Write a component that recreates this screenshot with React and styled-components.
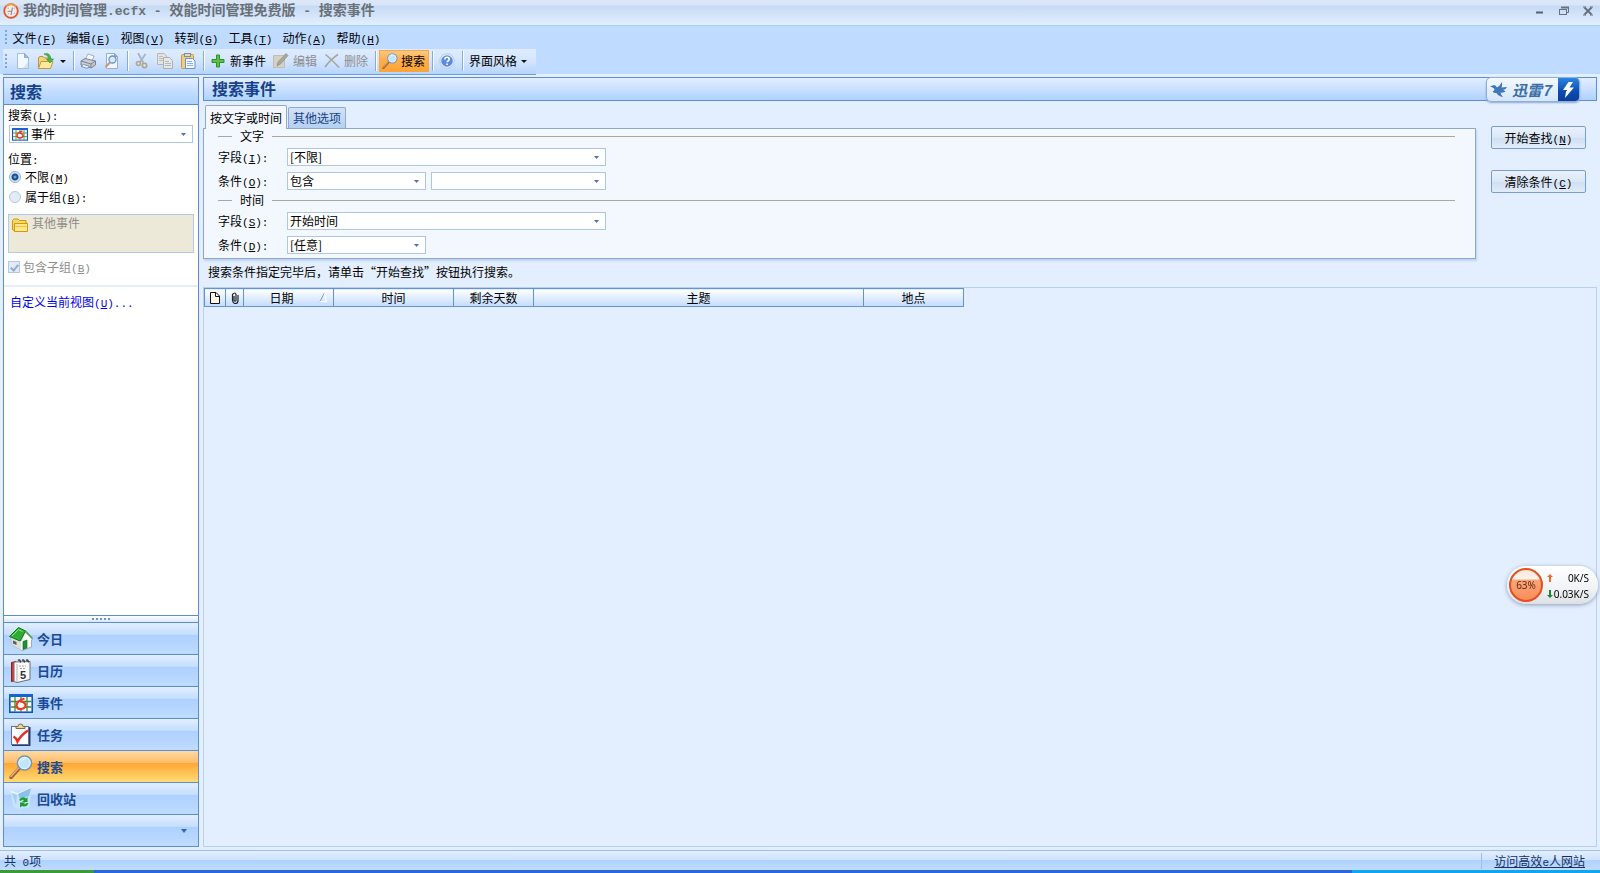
import { useState } from "react"
import styled, { createGlobalStyle } from "styled-components"

const MENUS = [
    ["文件", "F"],
    ["编辑", "E"],
    ["视图", "V"],
    ["转到", "G"],
    ["工具", "T"],
    ["动作", "A"],
    ["帮助", "H"],
]

const COLUNAS = [
    { nome: "日期", largura: 90, ordenada: true },
    { nome: "时间", largura: 120 },
    { nome: "剩余天数", largura: 80 },
    { nome: "主题", largura: 330 },
    { nome: "地点", largura: 100 },
]

const NAVEGACAO = [
    { nome: "今日", Icone: IconeCasa },
    { nome: "日历", Icone: IconeCalendario },
    { nome: "事件", Icone: IconeEvento },
    { nome: "任务", Icone: IconeTarefa },
    { nome: "搜索", Icone: IconeLupa },
    { nome: "回收站", Icone: IconeLixeira },
]

function Tecla({ letra, fim = "" }) {
    return <Mono>(<u>{letra}</u>){fim}</Mono>
}

function Combo({ id, rotulo, opcao = "", largura, recuo, children }) {
    return (
        <CaixaCombo $largura={largura}>
            {children}
            <Selecao id={id} aria-label={rotulo} $recuo={recuo}>
                <option>{opcao}</option>
            </Selecao>
            <SetaCombo width="5" height="3" viewBox="0 0 5 3"><path d="M0 0h5L2.5 3z" fill="#4a72b0" /></SetaCombo>
        </CaixaCombo>
    )
}

export default function App() {
    const [local, setLocal] = useState("todos")
    const [aba, setAba] = useState(0)
    const [ativo, setAtivo] = useState("搜索")

    return (
        <Janela>
            <EstiloGlobal />
            <BarraTitulo>
                <IconeApp />
                <h1>我的时间管理<span>.ecfx - </span>效能时间管理免费版<span> - </span>搜索事件</h1>
                <BotoesJanela>
                    <button aria-label="最小化"><svg width="10" height="10" viewBox="0 0 10 10"><path d="M1 6.5h7" stroke="#596270" strokeWidth="2" /></svg></button>
                    <button aria-label="还原"><svg width="10" height="10" viewBox="0 0 10 10" fill="none" stroke="#68727f"><path d="M2.5 2V1.5h7v5H8" /><path d="M2 1.5h8" strokeWidth="2" /><rect x=".5" y="3.5" width="7" height="5" /></svg></button>
                    <button aria-label="关闭"><svg width="10" height="10" viewBox="0 0 10 10"><path d="M1.500 1.500l7 7M8.500 1.500l-7 7" stroke="#66707e" strokeWidth="2" /><path d="M0 1h3M7 1h3M0 9h3M7 9h3" stroke="#66707e" /></svg></button>
                </BotoesJanela>
            </BarraTitulo>

            <BarraMenu>
                <Pega />
                {MENUS.map(([nome, letra]) =>
                    <button key={letra}>{nome}<Tecla letra={letra} /></button>
                )}
            </BarraMenu>

            <Ferramentas>
                <Pega />
                <Ferramenta aria-label="新建"><IconeNovo /></Ferramenta>
                <Ferramenta aria-label="打开"><IconeAbrir /><Seta /></Ferramenta>
                <Divisor />
                <Ferramenta aria-label="打印"><IconeImpressora /></Ferramenta>
                <Ferramenta aria-label="预览"><IconePrevia /></Ferramenta>
                <Divisor />
                <Ferramenta aria-label="剪切"><IconeTesoura /></Ferramenta>
                <Ferramenta aria-label="复制"><IconeCopiar /></Ferramenta>
                <Ferramenta aria-label="粘贴"><IconeColar /></Ferramenta>
                <Divisor />
                <Ferramenta><IconeMais />新事件</Ferramenta>
                <Ferramenta disabled><IconeEditar />编辑</Ferramenta>
                <Ferramenta disabled><IconeExcluir />删除</Ferramenta>
                <Divisor />
                <Ferramenta $ativa><IconeLupa tamanho={16} />搜索</Ferramenta>
                <Divisor />
                <Ferramenta aria-label="帮助"><IconeAjuda /></Ferramenta>
                <Divisor />
                <Ferramenta>界面风格<Seta /></Ferramenta>
            </Ferramentas>

            <Area>
                <Lateral>
                    <TituloLateral>搜索</TituloLateral>
                    <Filtros>
                        <label htmlFor="tipo">搜索<Tecla letra="L" fim=":" /></label>
                        <Combo id="tipo" opcao="事件" recuo={21}>
                            <IconeCombo><IconeEvento tamanho={16} /></IconeCombo>
                        </Combo>
                        <p>位置<Mono>:</Mono></p>
                        <Opcao>
                            <input type="radio" name="local" checked={local === "todos"} onChange={() => setLocal("todos")} />
                            <span>不限<Tecla letra="M" /></span>
                        </Opcao>
                        <Opcao>
                            <input type="radio" name="local" checked={local === "grupo"} onChange={() => setLocal("grupo")} />
                            <span>属于组<Tecla letra="B" fim=":" /></span>
                        </Opcao>
                        <Grupo><IconePasta />其他事件</Grupo>
                        <Opcao $apagada>
                            <input type="checkbox" checked disabled readOnly />
                            <span>包含子组<Tecla letra="B" /></span>
                        </Opcao>
                    </Filtros>
                    <LinkVista href="#vista">自定义当前视图<Tecla letra="U" fim="..." /></LinkVista>
                    <Divisoria><i /><i /><i /><i /><i /></Divisoria>
                    <nav>
                        {NAVEGACAO.map(({ nome, Icone }) =>
                            <ItemNav key={nome} $ativo={nome === ativo} onClick={() => setAtivo(nome)}>
                                <Icone />{nome}
                            </ItemNav>
                        )}
                        <ItemNav aria-label="更多" $fim><svg width="6" height="4" viewBox="0 0 6 4"><path d="M0 0h6L3 4z" fill="#3a66a8" /></svg></ItemNav>
                    </nav>
                </Lateral>

                <Principal>
                    <TituloPrincipal>搜索事件</TituloPrincipal>
                    <Xunlei>
                        <div>
                            <svg width="18" height="16" viewBox="0 0 18 16" fill="#3f78b4"><path d="M0 4.500L4 3q2 0 3 2.500Q9.500 4.500 12 0q.5 3-.5 5.500L17 5q-1 2.500-4 3 2 .5 2.500 1.500-2 1.500-5 1 .5 2.500 2.500 4.500Q8 14 6.500 11 4 11.500 2.500 9.500 4.500 9 4.500 7 3 5 0 4.500z" /></svg>
                            迅雷7
                        </div>
                        <b><svg width="13" height="16" viewBox="0 0 13 16" fill="#fff"><path d="M6.500 0L1 8h4.500L4 9.500 3 16l9-10.500H7.500L11 0z" /></svg></b>
                    </Xunlei>

                    <Busca>
                        <div>
                            <Abas>
                                <Aba $ativa={aba === 0} onClick={() => setAba(0)}>按文字或时间</Aba>
                                <Aba $ativa={aba === 1} onClick={() => setAba(1)}>其他选项</Aba>
                            </Abas>
                            <Painel>
                                <Secao>
                                    <Legenda>文字</Legenda>
                                    <Linha>
                                        <label htmlFor="campo-texto">字段<Tecla letra="I" fim=":" /></label>
                                        <Combo id="campo-texto" opcao="[不限]" largura={319} />
                                    </Linha>
                                    <Linha>
                                        <label htmlFor="cond-texto">条件<Tecla letra="O" fim=":" /></label>
                                        <Combo id="cond-texto" opcao="包含" largura={139} />
                                        <Combo rotulo="文字内容" largura={175} />
                                    </Linha>
                                </Secao>
                                <Secao>
                                    <Legenda>时间</Legenda>
                                    <Linha>
                                        <label htmlFor="campo-tempo">字段<Tecla letra="S" fim=":" /></label>
                                        <Combo id="campo-tempo" opcao="开始时间" largura={319} />
                                    </Linha>
                                    <Linha>
                                        <label htmlFor="cond-tempo">条件<Tecla letra="D" fim=":" /></label>
                                        <Combo id="cond-tempo" opcao="[任意]" largura={139} />
                                    </Linha>
                                </Secao>
                            </Painel>
                        </div>
                        <Acoes>
                            <Botao>开始查找<Tecla letra="N" /></Botao>
                            <Botao>清除条件<Tecla letra="C" /></Botao>
                        </Acoes>
                    </Busca>

                    <Dica>搜索条件指定完毕后，请单击“开始查找”按钮执行搜索。</Dica>

                    <Resultados>
                        <Tabela>
                            <colgroup>
                                <col width="21" />
                                <col width="18" />
                                {COLUNAS.map(c => <col key={c.nome} width={c.largura} />)}
                            </colgroup>
                            <thead>
                                <tr>
                                    <th aria-label="图标"><svg width="10" height="12" viewBox="0 0 10 12"><path d="M.5.5h5.500L9.500 4v7.500h-9z" fill="#fbf8e8" stroke="#111" /><path d="M5.500.5V4.500h4" fill="none" stroke="#111" /></svg></th>
                                    <th aria-label="附件"><svg width="8" height="12" viewBox="0 0 8 12" fill="none" stroke="#222" strokeWidth="1.200"><path d="M3 4v4.500q1 1.500 2 0V2.500Q4-.5 1.500 2.500v6q.5 3 3 3t2.500-3V3" /></svg></th>
                                    {COLUNAS.map(c =>
                                        <th key={c.nome}>
                                            <Celula>
                                                <span>{c.nome}</span>
                                                {c.ordenada && <svg width="8" height="9" viewBox="0 0 8 9"><path d="M1 8.500L5 .5" stroke="#7fa0d8" /><path d="M5.500 1l2 7.500H1" stroke="#fff" fill="none" /></svg>}
                                            </Celula>
                                        </th>
                                    )}
                                </tr>
                            </thead>
                        </Tabela>
                    </Resultados>
                </Principal>
            </Area>

            <BarraStatus>
                <span>共<Mono>&nbsp;0</Mono>项</span>
                <div><a href="#site">访问高效<Mono>e</Mono>人网站</a></div>
            </BarraStatus>
            <Rodape><i /><i /></Rodape>

            <Velocidade>
                <Medidor>63%</Medidor>
                <dl>
                    <dt><svg width="6" height="8" viewBox="0 0 6 8"><path d="M3 0l3 3H4v5H2V3H0z" fill="#f26a1b" /></svg></dt>
                    <dd>0K/S</dd>
                    <dt><svg width="6" height="8" viewBox="0 0 6 8"><path d="M3 8l3-3H4V0H2v5H0z" fill="#178a2c" /></svg></dt>
                    <dd>0.03K/S</dd>
                </dl>
            </Velocidade>
        </Janela>
    )
}

/* ---------- icones ---------- */

function Seta() {
    return <svg width="6" height="3" viewBox="0 0 6 3"><path d="M0 0h6L3 3z" fill="#111" /></svg>
}

function IconeApp() {
    return (
        <svg width="16" height="16" viewBox="0 0 16 16">
            <circle cx="8" cy="8" r="6.800" fill="#f4ece6" stroke="#e4572e" strokeWidth="1.800" />
            <path d="M3 3.500A6.800 6.800 0 0 1 13 3.500" fill="none" stroke="#f49a3c" strokeWidth="1.600" />
            <path d="M8 12l1.500-7.500M4.500 8.500L8.500 8M11 5l.5.5M5 5l.5.5M11.500 10.500l-.5-.5M5 11l.5-.5" stroke="#8d8b94" strokeWidth="1.200" />
        </svg>
    )
}

function IconeNovo() {
    return (
        <svg width="16" height="16" viewBox="0 0 16 16">
            <path d="M2.500.5h7l4 4v11h-11z" fill="#f2f8ff" stroke="#a9bedb" />
            <path d="M9.500.5v4h4z" fill="#9dc0ea" stroke="#87a9d6" />
            <path d="M8 15l5-6v6z" fill="#cfe2f8" />
        </svg>
    )
}

function IconeAbrir() {
    return (
        <svg width="16" height="16" viewBox="0 0 16 16">
            <path d="M.5 14.500v-10L2 3.500h3l1.500 1.500h6v9.500z" fill="#f3d477" stroke="#b8943c" />
            <path d="M.5 15.500L3 8.500h12l-2.500 7z" fill="#fde99a" stroke="#bf9a3c" />
            <path d="M6 1q6-2 7 5h2.500L12 10 8.500 6H11Q10.500 2 6 1z" fill="#4cb848" stroke="#2b8a30" strokeWidth=".6" />
        </svg>
    )
}

function IconeImpressora() {
    return (
        <svg width="17" height="16" viewBox="0 0 17 16">
            <path d="M5 7l3-6 6 2-2.500 6z" fill="#fff" stroke="#9fb0c8" />
            <path d="M1 8l4-2.500 10.500 2.500v4L11 15 1 12z" fill="#c7ccd6" stroke="#7b8494" />
            <path d="M1 8l10 3 4.500-3M11 11v4" fill="none" stroke="#7b8494" />
            <path d="M3.500 11.500l6 1.800-2.500 2-6-2z" fill="#f8fbff" stroke="#7390bd" />
            <path d="M12.500 12l1.500-1" stroke="#e9b844" strokeWidth="1.500" />
        </svg>
    )
}

function IconePrevia() {
    return (
        <svg width="16" height="16" viewBox="0 0 16 16">
            <path d="M2.500.5h8l3 3v12h-11z" fill="#eff6ff" stroke="#98afd0" />
            <path d="M10.500.5v3h3z" fill="#94b5e4" stroke="#8aa8d4" />
            <circle cx="8.500" cy="6.500" r="3.500" fill="#d5ecff" stroke="#6d93c8" strokeWidth="1.300" />
            <path d="M6 9.500L1.500 14" stroke="#c9966a" strokeWidth="2" />
        </svg>
    )
}

function IconeTesoura() {
    return (
        <svg width="16" height="16" viewBox="0 0 16 16" fill="none">
            <path d="M4 0l5.500 10M11.500 1L6 9" stroke="#a5b3c7" strokeWidth="1.800" />
            <circle cx="4.500" cy="10.500" r="2" stroke="#b3a486" strokeWidth="1.600" />
            <circle cx="10.500" cy="12.500" r="2.200" stroke="#b3a486" strokeWidth="1.600" />
        </svg>
    )
}

function IconeCopiar() {
    return (
        <svg width="16" height="16" viewBox="0 0 16 16">
            <path d="M.5.500h6.500l2.500 2.500v8.500h-9z" fill="#e4e5e3" stroke="#b9b8ad" />
            <path d="M2 3.500h4M2 5.500h5M2 7.500h4" stroke="#b9bec5" />
            <path d="M6.500 4.500h6l3 3v8h-9z" fill="#e6e8e8" stroke="#b0b0a6" />
            <path d="M8 8.500h4M8 10.500h6M8 12.500h6" stroke="#b1b8c2" />
        </svg>
    )
}

function IconeColar() {
    return (
        <svg width="16" height="16" viewBox="0 0 16 16">
            <rect x="1.500" y="1.500" width="12" height="14" rx="1" fill="#f3cf73" stroke="#c89b3c" />
            <rect x="4.500" y=".5" width="6" height="3" fill="#d6dbe4" stroke="#848d9c" />
            <path d="M5.500 5.500h7l2.500 2.500v7.500H5.500z" fill="#f1f7ff" stroke="#6c93cf" />
            <path d="M7 8.500h5M7 10.500h6M7 12.500h6" stroke="#8db0e2" />
        </svg>
    )
}

function IconeMais() {
    return <svg width="16" height="16" viewBox="0 0 16 16"><path d="M6.500 2h3v4.500H14v3H9.500V14h-3V9.500H2v-3h4.500z" fill="#5cc247" stroke="#2f8f2b" /></svg>
}

function IconeEditar() {
    return (
        <svg width="16" height="16" viewBox="0 0 16 16">
            <path d="M.5 2.500h11v12H.5z" fill="#d4d2c4" stroke="#c0beb1" />
            <path d="M13 .5l2 2L7.500 11 4 13l1-4z" fill="#a8a798" stroke="#8f8e83" strokeWidth=".7" />
        </svg>
    )
}

function IconeExcluir() {
    return <svg width="16" height="16" viewBox="0 0 16 16"><path d="M1.500 1.500Q7 6 15 14.500M14 1.500Q7 6 1 14" fill="none" stroke="#a7a69d" strokeWidth="1.600" /></svg>
}

function IconeAjuda() {
    return (
        <svg width="16" height="16" viewBox="0 0 16 16">
            <circle cx="8" cy="8" r="7.200" fill="#edf3fc" stroke="#b9c8df" />
            <circle cx="8" cy="8" r="5.800" fill="#5b8be0" />
            <path d="M5.800 6.500q0-2.200 2.200-2.200t2.200 1.900q0 1.200-1.200 1.800-.9.500-.9 1.300M8.100 10.500v1.500" fill="none" stroke="#fff" strokeWidth="1.600" />
        </svg>
    )
}

function IconeLupa({ tamanho = 24 }) {
    return (
        <svg width={tamanho} height={tamanho} viewBox="0 0 24 24">
            <path d="M2 22.500L10.500 13" stroke="#a0643a" strokeWidth="3.400" strokeLinecap="round" />
            <path d="M2 21.500L10 12.500" stroke="#e9b27c" strokeWidth="1.400" strokeLinecap="round" />
            <circle cx="15.500" cy="8" r="7" fill="#bfe6fb" stroke="#6f93bd" strokeWidth="1.600" />
            <circle cx="15.500" cy="8" r="5.700" fill="none" stroke="#eef8ff" />
            <path d="M12 7q1-4 5-3.500Q13 5 12 7z" fill="#fff" />
        </svg>
    )
}

function IconeCasa() {
    return (
        <svg width="24" height="24" viewBox="0 0 24 24">
            <path d="M2 10l10 4 4-9 7.500 7-1 1v7L13 23.500 2.500 17.500z" fill="#fbfbf8" stroke="#9a9d9a" strokeWidth=".8" />
            <path d="M2.500 11L12 15v8L2.500 17.500z" fill="#dcdeda" />
            <path d="M4 13.500l3.500 1.500v3L4 16.500z" fill="#555c66" />
            <path d="M14 14.500l4-1.500v8l-4 1.500z" fill="#1e9130" stroke="#0f6320" strokeWidth=".6" />
            <path d="M.5 9.500L9.500.5 16.500 4 11 14z" fill="#2fae35" stroke="#17751f" />
            <path d="M16 3.500l7.500 8" stroke="#4f9b52" strokeWidth="1.400" />
            <path d="M3 9L9.500 2.500l4 2" fill="none" stroke="#8ee486" />
        </svg>
    )
}

function IconeCalendario() {
    return (
        <svg width="24" height="24" viewBox="0 0 24 24">
            <path d="M2.500 3.500L7 2.500v19l-4.500 1z" fill="#d33a32" stroke="#8f1c1a" />
            <path d="M5 3l16-.5v18L8 23.500l-3-1z" fill="#fbfbfb" stroke="#6e6e72" />
            <path d="M8 5v18" stroke="#b5b5b8" />
            <path d="M9 1.500q2-2 2.500 2M13 1.500q2-2 2.500 2M17 1.500q2-2 2.500 2" fill="none" stroke="#333" strokeWidth="1.300" />
            <path d="M10 7h7M11 9.500h6" stroke="#aaa" strokeDasharray="2 1" />
            <text x="11" y="20" fontFamily="Liberation Sans, sans-serif" fontSize="11" fontWeight="700" fill="#333">5</text>
        </svg>
    )
}

function IconeEvento({ tamanho = 24 }) {
    return (
        <svg width={tamanho} height={tamanho} viewBox="0 0 24 24">
            <rect x=".8" y="3.800" width="22.400" height="17.400" fill="#fff" stroke="#0c55c0" strokeWidth="1.600" />
            <path d="M0 3h24v3H0z" fill="#1264d8" />
            <path d="M1.500 10.500h21M1.500 16h21M6 6v14.500M18 6v14.500M12 17v3.500M12 6v3" stroke="#3f8a3a" strokeWidth="1.300" />
            <path d="M15.500 7.500Q7.500 10 7.500 14.500q.5 4 5 3.500 4.500-1 4-4.500-1.500-3-5.500-3" fill="#fff" stroke="#ee3a22" strokeWidth="2.200" />
        </svg>
    )
}

function IconeTarefa() {
    return (
        <svg width="24" height="24" viewBox="0 0 24 24">
            <rect x="3" y="4" width="18.500" height="19" fill="#2c3e68" />
            <rect x="2.500" y="3.500" width="17" height="18" fill="#fafcff" stroke="#5f6f98" />
            <path d="M7 5.500V3.500h2Q9 1 11.500 1T14 3.500h2v2z" fill="#e6d6a2" stroke="#7d6b3a" />
            <path d="M4.500 13.500q3 1.500 4 5Q12 12 19 7.500" fill="none" stroke="#e42c20" strokeWidth="2.500" />
        </svg>
    )
}

function IconeLixeira() {
    return (
        <svg width="24" height="24" viewBox="0 0 24 24">
            <path d="M1.500 4.500l8-1 13-3-2 20L9 22l-5-2.500z" fill="#c6e3f9" />
            <path d="M1.500 4.500L9 7l13.500-6.500" fill="none" stroke="#e9f6ff" strokeWidth="1.600" />
            <path d="M9 7l13-6-2 8-9 3z" fill="#8cc0ec" />
            <path d="M3 6l5 2-1 10z" fill="#a4cff2" />
            <path d="M10 13q3-4.500 7-1.500l1.500-1.500v5h-5.500L15 13q-2-1-3 1zM19.500 16q-2 5-6.500 3L11 20.500v-5h5.500L15 17q1.500.5 2.500-1z" fill="#1d9c30" />
        </svg>
    )
}

function IconePasta() {
    return (
        <svg width="16" height="14" viewBox="0 0 16 14">
            <path d="M.5 12V2.500l1.500-1.500h4l1.500 1.500h6.500V6" fill="#f8d667" stroke="#d09a10" />
            <path d="M2.500 13.500v-8h13v8z" fill="#fde58c" stroke="#d09a10" />
            <path d="M.5 11l2 2.500" stroke="#d09a10" />
            <path d="M3.500 8.500h11" stroke="#f2c33c" />
        </svg>
    )
}

/* ---------- estilos ---------- */

const EstiloGlobal = createGlobalStyle`
    *{
        box-sizing: border-box;
    }
    body{
        margin: 0;
        background: #e3efff;
    }
    body, button, select, input{
        font-family: "Noto Sans CJK SC", sans-serif;
        font-size: 12px;
        line-height: 16px;
        color: #000;
    }
    h1, h2, p, dl, dd{
        margin: 0;
    }
    button{
        border: none;
        background: none;
        padding: 0;
        white-space: nowrap;
    }
    svg{
        flex-shrink: 0;
    }
`

const Mono = styled.span`
    font-family: "Liberation Mono", monospace;
    font-size: 11px;
    line-height: 1;
`

const Janela = styled.div`
    min-height: 100vh;
    display: flex;
    flex-direction: column;
`

const BarraTitulo = styled.header`
    height: 26px;
    padding: 0 7px 3px 3px;
    display: flex;
    align-items: center;
    gap: 4px;
    background: linear-gradient(#dce8f8 0, #d9e6f8 5px, #c6daf5 6px, #e2effd 100%);
    border-bottom: 1px solid #a3d0ee;

    h1{
        flex: 1;
        font-family: "Liberation Mono", "Noto Sans CJK SC", monospace;
        font-size: 14px;
        font-weight: 700;
        color: #6a7078;
        white-space: pre;
    }
    h1 span{
        font-size: 13px;
    }
`

const BotoesJanela = styled.div`
    display: flex;
    gap: 14px;

    button{
        width: 10px;
        height: 10px;
        display: flex;
    }
`

const Pega = styled.i`
    width: 2px;
    height: 15px;
    background: repeating-linear-gradient(#7ea6dc 0 2px, transparent 2px 4px);
`

const BarraMenu = styled.nav`
    height: 23px;
    padding-left: 5px;
    display: flex;
    align-items: center;
    background: #bfdbff;

    button{
        width: 54px;
        padding-left: 1px;
    }
`

const Ferramentas = styled.div`
    position: relative;
    height: 25px;
    padding: 0 0 1px 5px;
    display: flex;
    align-items: center;
    background: #bfdbff;

    &::before{
        content: "";
        position: absolute;
        left: 3px;
        top: 0;
        width: 533px;
        height: 25px;
        background: linear-gradient(#dfecff, #d2e4fe 50%, #b5d4fd);
        border-bottom: 1px solid #6f9dd9;
    }
    > *{
        position: relative;
    }
    ${Pega}{
        margin-right: 5px;
    }
`

const Ferramenta = styled.button`
    height: 22px;
    padding: ${({ $ativa }) => $ativa ? "0 3px 0 2px" : "0 4px 0 3px"};
    display: flex;
    align-items: center;
    gap: ${({ $ativa }) => $ativa ? 3 : 4}px;
    background: ${({ $ativa }) => $ativa ? "linear-gradient(#fdc986, #fdb04f 40%, #ffa336)" : "none"};
    border: ${({ $ativa }) => $ativa ? "1px solid #fba63c" : "none"};

    &:disabled{
        color: #8d8d8d;
    }
    svg + svg{
        margin-left: 2px;
    }
`

const Divisor = styled.i`
    width: 2px;
    height: 20px;
    margin: 0 2px 0 3px;
    background: #7fabe6;
    border-right: 1px solid #fff;
`

const Area = styled.div`
    flex: 1;
    display: grid;
    grid-template-columns: 196px minmax(0, 1fr);
    gap: 4px;
    padding: 3px;
`

const Lateral = styled.aside`
    display: flex;
    flex-direction: column;
    background: #fff;
    border: 1px solid #5b8dd6;
`

const TituloLateral = styled.h2`
    height: 27px;
    padding-left: 6px;
    font-size: 16px;
    line-height: 26px;
    color: #15428b;
    background: linear-gradient(#e3efff, #c4ddff 50%, #afd2ff);
    border-bottom: 1px solid #5b8dd6;
`

const Filtros = styled.div`
    padding: 2px 4px 10px 4px;
    border-bottom: 2px solid #e3efff;

    > label, > p{
        display: block;
        margin-bottom: 2px;
    }
    > p{
        margin-top: 8px;
    }
`

const Opcao = styled.label`
    && {
        display: flex;
        align-items: center;
        gap: 3px;
        margin-bottom: ${({ $apagada }) => $apagada ? 0 : 4}px;
        color: ${({ $apagada }) => $apagada ? "#8d8d8d" : "#000"};
    }
    input{
        appearance: none;
        width: 12px;
        height: 12px;
        margin: 0 1px;
        border: 1px solid #b4c8e4;
        background: #e2ebf6;
    }
    input[type="radio"]{
        border-radius: 50%;
    }
    input[type="radio"]:checked{
        border-color: #8db2e3;
        background: radial-gradient(circle at 5px 5px, #9fd0ee 0, #17548d 2px, #17548d 3px, #d5e5f7 4px);
    }
    input[type="checkbox"]{
        margin: 0;
        display: grid;
        place-items: center;
    }
    input[type="checkbox"]::before{
        content: "";
        width: 3px;
        height: 6px;
        border: solid #93abcb;
        border-width: 0 2px 2px 0;
        rotate: 40deg;
    }
`

const CaixaCombo = styled.div`
    position: relative;
    height: 18px;
    width: ${({ $largura }) => $largura ? `${$largura}px` : "auto"};
    margin: ${({ $largura }) => $largura ? 0 : "0 1px"};
`

const Selecao = styled.select`
    appearance: none;
    width: 100%;
    height: 18px;
    padding: 0 16px 0 ${({ $recuo = 2 }) => $recuo}px;
    border: 1px solid #abc6e6;
    border-radius: 0;
    background: #fff;
    line-height: 16px;
`

const SetaCombo = styled.svg`
    position: absolute;
    right: 7px;
    top: 8px;
    pointer-events: none;
`

const IconeCombo = styled.span`
    position: absolute;
    left: 3px;
    top: 1px;
    display: flex;
`

const Grupo = styled.div`
    display: flex;
    align-items: flex-start;
    gap: 4px;
    height: 39px;
    margin: 9px 0 6px 0;
    padding: 0 3px;
    color: #8d8d8d;
    background: #ece9d8;
    border: 1px solid #b4c9e8;

    svg{
        margin-top: 3px;
    }
`

const LinkVista = styled.a`
    flex: 1;
    padding: 7px 6px;
    color: #0000f0;
    text-decoration: none;
`

const Divisoria = styled.div`
    height: 7px;
    display: flex;
    align-items: center;
    justify-content: center;
    gap: 2px;
    background: linear-gradient(#fff, #d9e8ff);
    border-top: 1px solid #5b8dd6;

    i{
        width: 2px;
        height: 2px;
        background: #6f96cf;
    }
`

const ItemNav = styled.button`
    width: 100%;
    height: 32px;
    padding: 0 11px 0 5px;
    display: flex;
    align-items: center;
    justify-content: ${({ $fim }) => $fim ? "flex-end" : "flex-start"};
    gap: 4px;
    font-size: 13px;
    font-weight: 700;
    color: #1c4a92;
    border-top: 1px solid #5b8dd6;
    background: ${({ $ativo }) => $ativo
        ? "linear-gradient(#ffd9a0, #ffbd69 38%, #ffa633 40%, #fedd75)"
        : "linear-gradient(#e3efff, #c4ddff 38%, #add1ff 40%, #c0dbff)"};
`

const Principal = styled.main`
    position: relative;
    display: flex;
    flex-direction: column;
`

const TituloPrincipal = styled.h2`
    height: 24px;
    padding-left: 8px;
    font-size: 16px;
    line-height: 21px;
    color: #15428b;
    background: linear-gradient(#e3efff, #c4ddff 60%, #afd2ff);
    border: 1px solid #5b8dd6;
`

const Xunlei = styled.div`
    position: absolute;
    right: 17px;
    top: 0;
    height: 25px;
    display: flex;
    border: 1px solid #8faedb;
    border-radius: 5px;
    overflow: hidden;
    background: linear-gradient(#f4f9ff, #d5e6fa);
    box-shadow: 0 1px 2px #8fa8cc;

    div{
        display: flex;
        align-items: center;
        gap: 4px;
        width: 71px;
        padding-left: 3px;
        font-size: 15px;
        font-style: italic;
        font-weight: 700;
        color: #3a6ea8;
        white-space: nowrap;
    }
    b{
        width: 21px;
        display: grid;
        place-items: center;
        background: linear-gradient(#2b86e2, #0b4ab0 60%, #0a3f9c);
    }
`

const Busca = styled.div`
    display: grid;
    grid-template-columns: minmax(0, 1fr) 121px;
`

const Abas = styled.div`
    display: flex;
    align-items: flex-end;
    gap: 1px;
    height: 27px;
    padding-left: 2px;
`

const Aba = styled.button`
    position: relative;
    height: ${({ $ativa }) => $ativa ? 24 : 21}px;
    padding: 0 4px;
    margin-bottom: ${({ $ativa }) => $ativa ? -1 : 0}px;
    color: ${({ $ativa }) => $ativa ? "#000" : "#15428b"};
    background: ${({ $ativa }) => $ativa ? "#f4f8fe" : "linear-gradient(#d3e1f5, #b5d0f0)"};
    border: 1px solid #8fa9d0;
    border-bottom: none;
    border-radius: 2px 2px 0 0;
    z-index: ${({ $ativa }) => $ativa ? 1 : 0};
`

const Painel = styled.div`
    display: flex;
    flex-direction: column;
    gap: 3px;
    padding: 0 20px 4px 14px;
    background: #f3f8fe;
    border: 1px solid #8ba7cf;
    box-shadow: 1px 2px 2px #c0d2ec;
`

const Secao = styled.section`
    display: flex;
    flex-direction: column;
    gap: 6px;
`

const Legenda = styled.h2`
    display: flex;
    align-items: center;
    gap: 8px;
    height: 14px;
    margin-bottom: -1px;
    font-size: 12px;
    font-weight: 400;

    &::before, &::after{
        content: "";
        width: 14px;
        height: 1px;
        background: #aca899;
    }
    &::after{
        flex: 1;
    }
`

const Linha = styled.div`
    display: flex;
    align-items: center;
    gap: 5px;
    height: 18px;

    label{
        width: 64px;
    }
`

const Acoes = styled.div`
    display: flex;
    flex-direction: column;
    gap: 21px;
    padding: 25px 11px 0 15px;
`

const Botao = styled.button`
    height: 23px;
    border: 1px solid #7a9cc8;
    border-radius: 2px;
    background: linear-gradient(#e9f2fd, #dbe7f7 50%, #cfdef2 52%, #e2edfb);
`

const Dica = styled.p`
    height: 28px;
    padding-left: 5px;
    line-height: 26px;
`

const Resultados = styled.div`
    flex: 1;
    border: 1px solid #b9cfee;
`

const Tabela = styled.table`
    width: 760px;
    table-layout: fixed;
    border-collapse: collapse;

    th{
        height: 18px;
        padding: 0;
        font-weight: 400;
        text-align: center;
        line-height: 14px;
        background: linear-gradient(#fff, #e3efff 45%, #c4dcff);
        border: 1px solid #6593cf;
    }
    th > svg{
        display: block;
        margin: 0 auto;
    }
`

const Celula = styled.div`
    display: flex;
    align-items: center;

    span{
        flex: 1;
    }
    svg{
        margin: 0 6px 0 0;
    }
`

const BarraStatus = styled.footer`
    height: 20px;
    padding: 0 15px 0 4px;
    display: flex;
    justify-content: space-between;
    align-items: center;
    color: #15305f;
    background: linear-gradient(#e3efff, #cfe2ff 45%, #afd2ff 50%, #c0dbff);
    border-top: 1px solid #9dbfe8;

    div{
        padding-left: 12px;
        border-left: 1px solid #9dbfe8;
    }
    a{
        color: #15305f;
    }
`

const Rodape = styled.div`
    height: 3px;
    display: flex;
    justify-content: space-between;
    background: #2a66e0;

    i{
        width: 94px;
        background: #3a9a3c;
    }
    i + i{
        width: 248px;
        background: #12a4f0;
    }
`

const Velocidade = styled.aside`
    position: fixed;
    right: 2px;
    top: 566px;
    width: 91px;
    height: 38px;
    padding: 2px 9px 2px 2px;
    display: flex;
    align-items: center;
    border-radius: 19px;
    background: linear-gradient(#fff, #f1f3f6 60%, #dcdfe4);
    box-shadow: 0 1px 4px #8b9bb5;

    dl{
        flex: 1;
        display: grid;
        grid-template-columns: 6px 1fr;
        padding: 1px 0 0 4px;
        font-family: "Noto Sans", sans-serif;
        font-size: 10px;
    }
    dt{
        display: flex;
        align-items: center;
    }
    dd{
        text-align: right;
    }
`

const Medidor = styled.div`
    width: 34px;
    height: 34px;
    border: 2px solid #e5501c;
    border-radius: 50%;
    text-align: center;
    line-height: 30px;
    font-family: "Noto Sans", sans-serif;
    font-size: 10px;
    color: #5a2c18;
    background: linear-gradient(#fbe6da 0, #fdf3ec 9px, #fba578 10px, #f98d5c);
`
